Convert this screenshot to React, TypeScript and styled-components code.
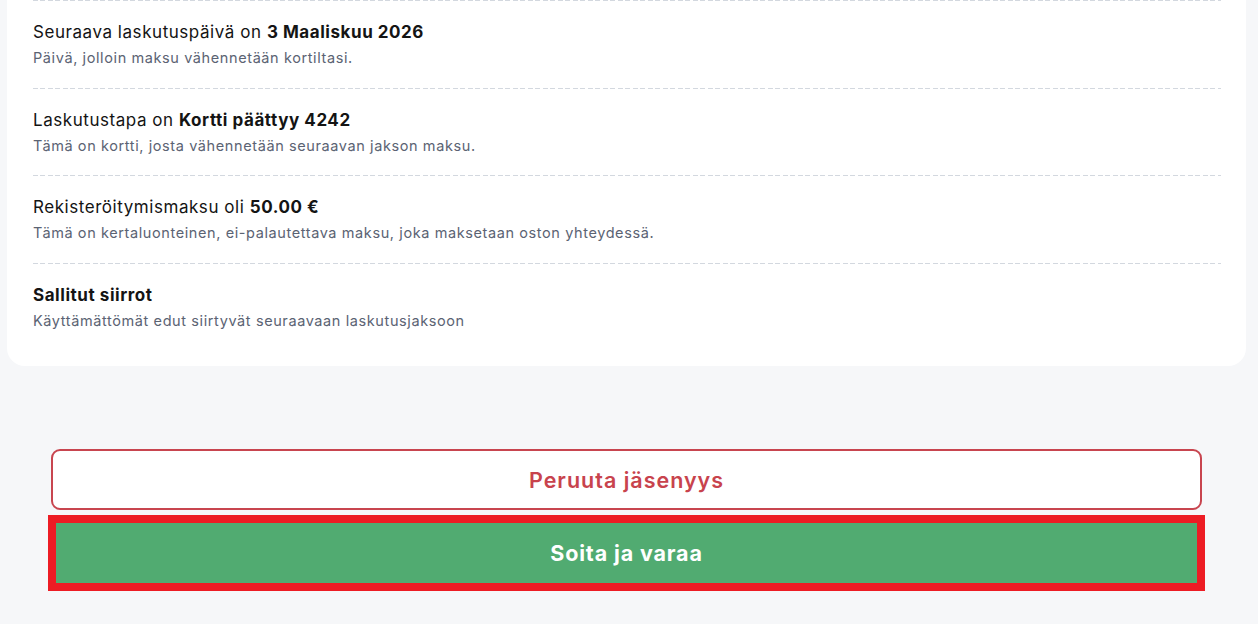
import React from "react";
import styled, { createGlobalStyle } from "styled-components";

const Global = createGlobalStyle`
  html, body { margin: 0; padding: 0; background: #f6f7f9; }
  body { font-family: Inter, "Open Sans", sans-serif; -webkit-font-smoothing: antialiased; }
  * { box-sizing: border-box; }
`;

const Page = styled.div`
  display: flex;
  flex-direction: column;
  padding: 0 12px 0 7px;
  min-height: 624px;
`;

const Card = styled.section`
  background: #ffffff;
  border-radius: 0 0 18px 18px;
  padding: 0 25px 16px 26px;
  display: flex;
  flex-direction: column;
`;

const Row = styled.div`
  padding: 20px 0 19.5px;
  display: flex;
  flex-direction: column;
  gap: 4px;
  background-image: repeating-linear-gradient(
    to right,
    #d3d8df 0,
    #d3d8df 5px,
    transparent 5px,
    transparent 7.5px
  );
  background-size: 100% 1px;
  background-repeat: no-repeat;
  background-position: top left;
`;

const Title = styled.div<{ $bold?: boolean }>`
  font-size: 17px;
  line-height: 24px;
  letter-spacing: 0.55px;
  color: #141414;
  font-weight: ${(p) => (p.$bold ? 700 : 400)};
  b { font-weight: 700; }
`;

const Sub = styled.div`
  font-size: 14.5px;
  line-height: 20px;
  letter-spacing: 0.6px;
  color: #5b6373;
`;

const Actions = styled.div`
  display: flex;
  flex-direction: column;
  align-items: stretch;
  gap: 5px;
  padding: 83px 44px 0 44px;
`;

const CancelButton = styled.button`
  height: 61px;
  background: #ffffff;
  border: 2px solid #c8454f;
  border-radius: 9px;
  color: #c8434d;
  font-family: Inter, sans-serif;
  font-size: 21.5px;
  font-weight: 600;
  letter-spacing: 1px;
  cursor: pointer;
`;

const CallButton = styled.button`
  margin: 0 -3px;
  height: 76px;
  background: #51ab71;
  border: 8px solid #ed1c24;
  border-radius: 0;
  color: #ffffff;
  font-family: Inter, sans-serif;
  font-size: 21.5px;
  font-weight: 700;
  letter-spacing: 0.85px;
  cursor: pointer;
`;

const rows = [
  { pre: "Seuraava laskutuspäivä on ", strong: "3 Maaliskuu 2026", sub: "Päivä, jolloin maksu vähennetään kortiltasi." },
  { pre: "Laskutustapa on ", strong: "Kortti päättyy 4242", sub: "Tämä on kortti, josta vähennetään seuraavan jakson maksu." },
  { pre: "Rekisteröitymismaksu oli ", strong: "50.00 €", sub: "Tämä on kertaluonteinen, ei-palautettava maksu, joka maksetaan oston yhteydessä." },
];

export default function App() {
  return (
    <>
      <Global />
      <Page>
        <Card>
          {rows.map((r) => (
            <Row key={r.strong}>
              <Title>
                {r.pre}
                <b>{r.strong}</b>
              </Title>
              <Sub>{r.sub}</Sub>
            </Row>
          ))}
          <Row>
            <Title $bold>Sallitut siirrot</Title>
            <Sub>Käyttämättömät edut siirtyvät seuraavaan laskutusjaksoon</Sub>
          </Row>
        </Card>
        <Actions>
          <CancelButton>Peruuta jäsenyys</CancelButton>
          <CallButton>Soita ja varaa</CallButton>
        </Actions>
      </Page>
    </>
  );
}
